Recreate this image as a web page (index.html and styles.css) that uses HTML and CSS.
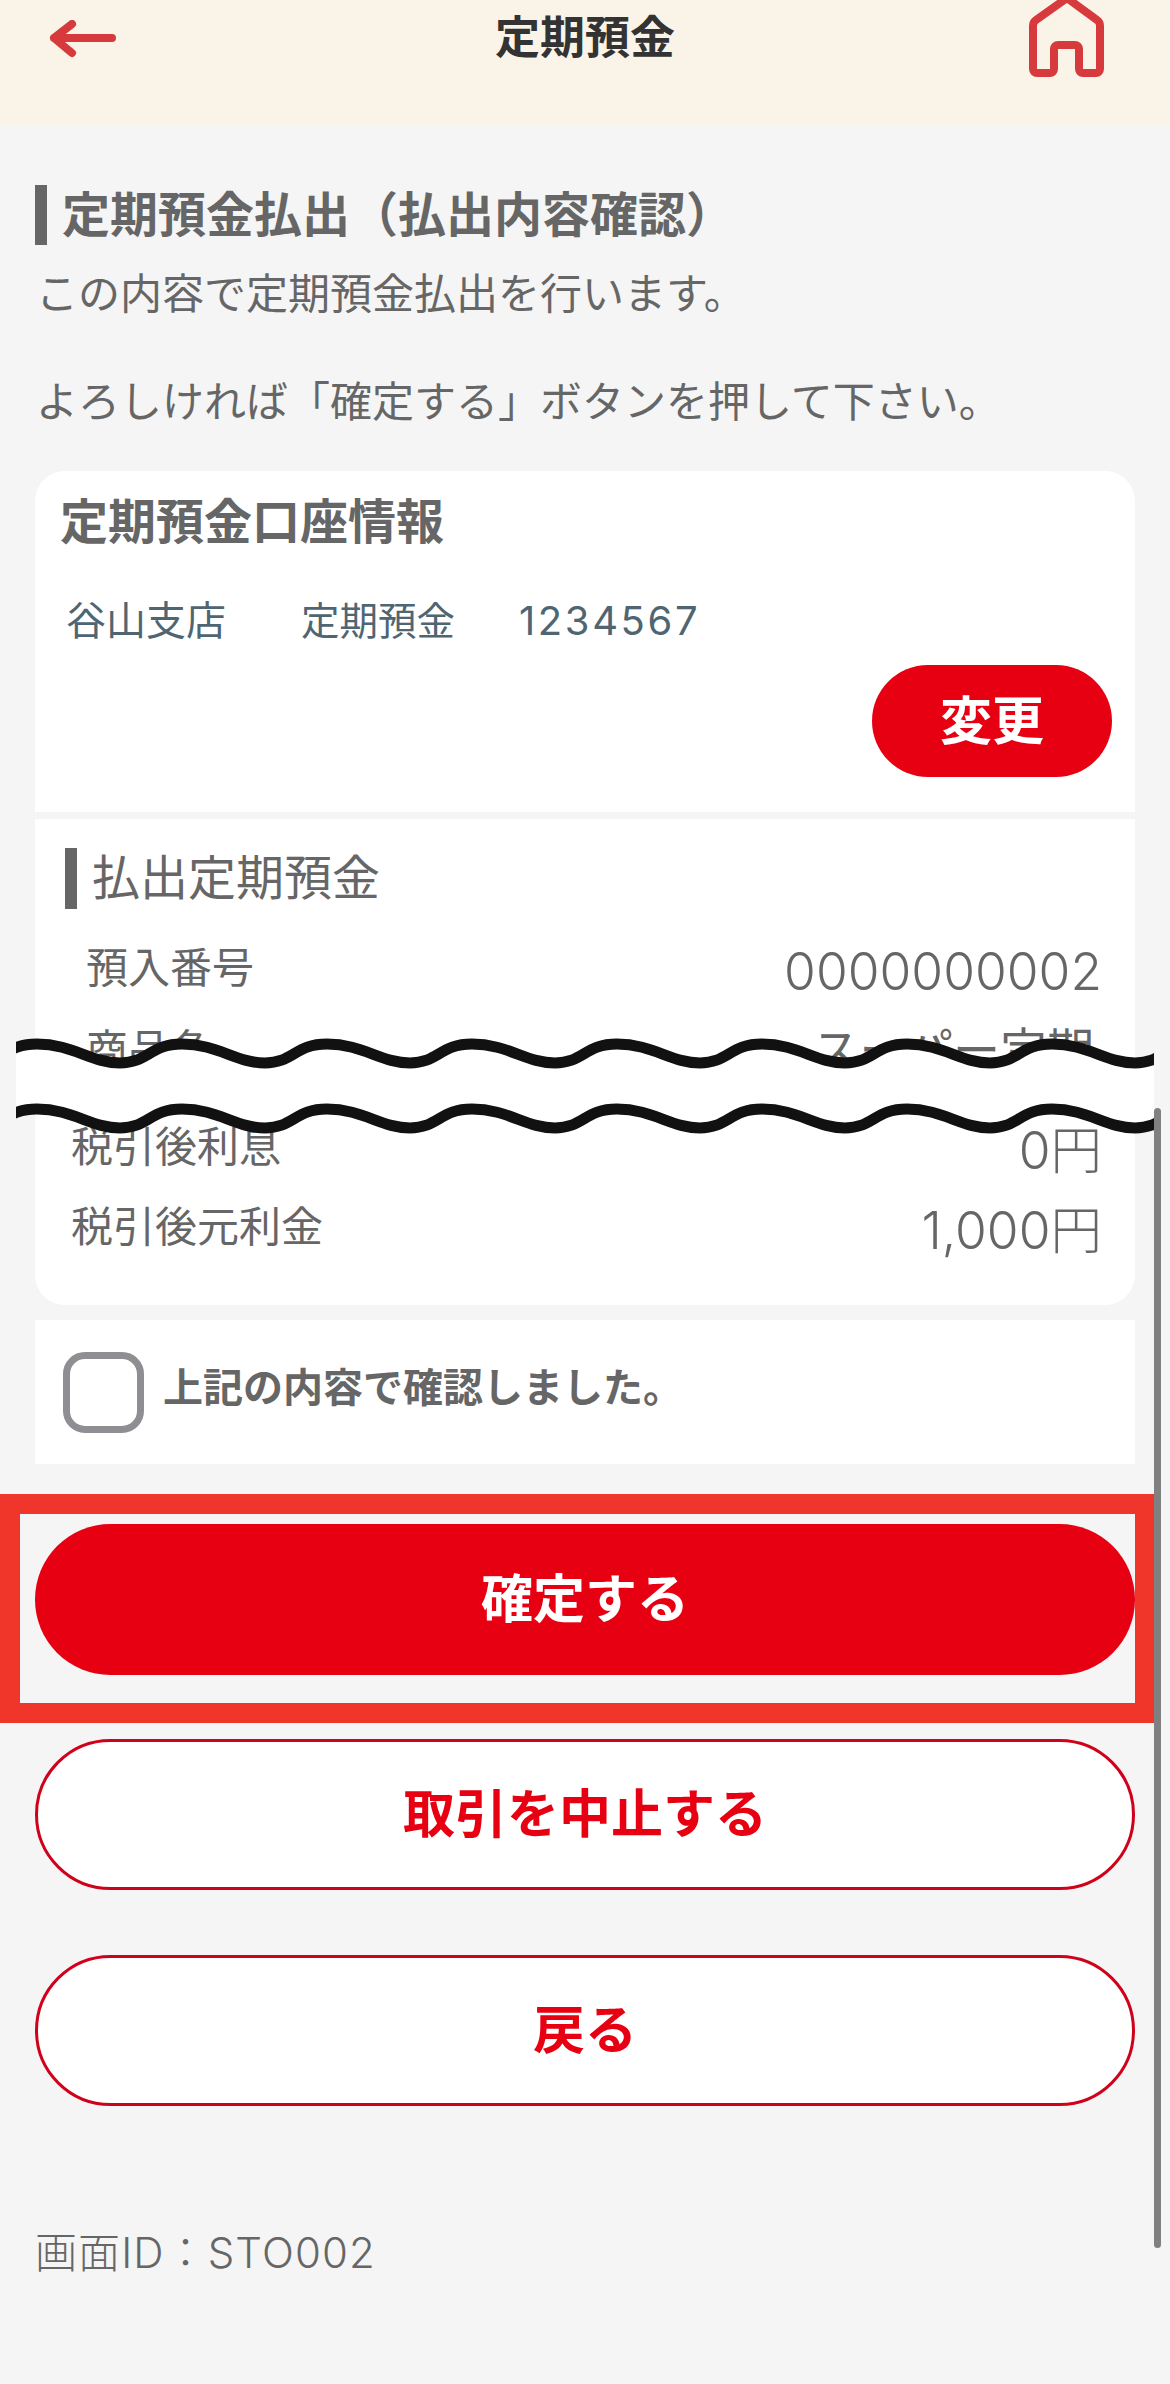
FILE: index.html
```html
<!DOCTYPE html>
<html lang="ja">
<head>
<meta charset="utf-8">
<title>定期預金</title>
<link rel="stylesheet" href="styles.css">
</head>
<body>
<div class="page">
  <header class="topbar">
    <svg class="ico-back" viewBox="0 0 76 44" width="76" height="44"><path d="M63 18H5M23 4 5 18l18 15" fill="none" stroke="#d63a3c" stroke-width="8" stroke-linecap="round" stroke-linejoin="round"/></svg>
    <h1 class="topbar-title">定期預金</h1>
    <svg class="ico-home" viewBox="0 0 94 94" width="94" height="94"><path d="M47 8 16 30Q13 32 13 36V79a4 4 0 0 0 4 4H30a4 4 0 0 0 4-4V59a4 4 0 0 1 4-4H55a4 4 0 0 1 4 4V79a4 4 0 0 0 4 4H76a4 4 0 0 0 4-4V36Q80 32 77 30Z" fill="none" stroke="#d63a3c" stroke-width="8" stroke-linejoin="round"/></svg>
  </header>

  <main class="content">
    <h2 class="section-title">定期預金払出（払出内容確認）</h2>
    <p class="lead">この内容で定期預金払出を行います。<br><br>よろしければ「確定する」ボタンを押して下さい。</p>

    <section class="card card-top">
      <h3 class="card-title">定期預金口座情報</h3>
      <div class="account">
        <span class="acc-branch">谷山支店</span>
        <span class="acc-type">定期預金</span>
        <span class="acc-no">1234567</span>
      </div>
      <div class="change-row"><button class="btn-change">変更</button></div>
    </section>

    <section class="card card-bottom">
      <h4 class="sub-title">払出定期預金</h4>
      <div class="row row-a first"><span class="k">預入番号</span><span class="v big">0000000002</span></div>
      <div class="row row-a second"><span class="k">商品名</span><span class="v kana">スーパー定期</span></div>
      <div class="row row-b third"><span class="k">税引後利息</span><span class="v big">0円</span></div>
      <div class="row row-b fourth"><span class="k">税引後元利金</span><span class="v big">1,000円</span></div>
    </section>

    <label class="confirm">
      <span class="checkbox"></span>
      <span class="confirm-text">上記の内容で確認しました。</span>
    </label>

    <button class="btn btn-primary">確定する</button>
    <button class="btn btn-outline cancel">取引を中止する</button>
    <button class="btn btn-outline back">戻る</button>

    <p class="screen-id">画面ID：STO002</p>
  </main>

  <div class="annot-frame"></div>

  <svg class="wave-break" viewBox="0 0 1138 110" width="1138" height="110">
    <path fill="#fff" d="M-124 14c35 0 55 19 83 19c28 0 30-19 62-19c35 0 55 19 83 19c28 0 30-19 62-19c35 0 55 19 83 19c28 0 30-19 62-19c35 0 55 19 83 19c28 0 30-19 62-19c35 0 55 19 83 19c28 0 30-19 62-19c35 0 55 19 83 19c28 0 30-19 62-19c35 0 55 19 83 19c28 0 30-19 62-19c35 0 55 19 83 19c28 0 30-19 62-19c35 0 55 19 83 19c28 0 30-19 62-19l0 65c-32 0-34 19-62 19c-28 0-48-19-83-19c-32 0-34 19-62 19c-28 0-48-19-83-19c-32 0-34 19-62 19c-28 0-48-19-83-19c-32 0-34 19-62 19c-28 0-48-19-83-19c-32 0-34 19-62 19c-28 0-48-19-83-19c-32 0-34 19-62 19c-28 0-48-19-83-19c-32 0-34 19-62 19c-28 0-48-19-83-19c-32 0-34 19-62 19c-28 0-48-19-83-19c-32 0-34 19-62 19c-28 0-48-19-83-19z"/>
    <path id="w" fill="none" stroke="#111" stroke-width="11" d="M-124 14c35 0 55 19 83 19c28 0 30-19 62-19c35 0 55 19 83 19c28 0 30-19 62-19c35 0 55 19 83 19c28 0 30-19 62-19c35 0 55 19 83 19c28 0 30-19 62-19c35 0 55 19 83 19c28 0 30-19 62-19c35 0 55 19 83 19c28 0 30-19 62-19c35 0 55 19 83 19c28 0 30-19 62-19c35 0 55 19 83 19c28 0 30-19 62-19c35 0 55 19 83 19c28 0 30-19 62-19"/>
    <use href="#w" y="65"/>
  </svg>

  <div class="scroll-thumb"></div>
</div>
</body>
</html>
```

FILE: styles.css
```css
* { box-sizing: border-box; }
html, body { margin: 0; padding: 0; }
body {
  background: #f5f5f5;
  font-family: "Inter", "Noto Sans CJK JP", sans-serif;
  color: #666;
}
.page { position: relative; width: 1170px; height: 2384px; overflow: hidden; background: #f5f5f5; }

.topbar {
  position: relative;
  height: 125px;
  background: #faf3e8;
  display: flex;
  justify-content: space-between;
  align-items: flex-start;
  padding-left: 49px;
  padding-right: 56px;
}
.ico-back { margin-top: 20px; }
.ico-home { margin-top: -10px; }
.topbar-title {
  margin: 14px 0 0;
  font-size: 45px;
  line-height: 48px;
  font-weight: 700;
  color: #333;
  position: absolute;
  left: 0; right: 0;
  text-align: center;
}

.content { padding: 60px 35px 0; }

.section-title {
  margin: 0;
  height: 60px;
  border-left: 12px solid #666;
  padding-left: 15px;
  font-size: 48px;
  line-height: 60px;
  font-weight: 700;
  color: #666;
}
.lead {
  margin: 22px 0 0;
  padding-left: 1px;
  font-size: 42px;
  line-height: 54px;
  color: #666;
}

.card { background: #fff; }
.card-top {
  margin-top: 42px;
  height: 341px;
  border-radius: 30px 30px 0 0;
  padding: 24px 25px 0;
}
.card-title {
  margin: 0;
  font-size: 48px;
  line-height: 54px;
  font-weight: 700;
  color: #666;
}
.account {
  margin-top: 45px;
  padding-left: 6px;
  display: flex;
  font-size: 40px;
  line-height: 54px;
  color: #4f6672;
}
.acc-branch { width: 235px; }
.acc-type { width: 218px; font-size: 38.5px; }
.acc-no { letter-spacing: 2.6px; }
.change-row { display: flex; justify-content: flex-end; margin-top: 17px; margin-right: -2px; }
.btn-change {
  width: 240px;
  height: 112px;
  border: 0;
  border-radius: 56px;
  background: #e60012;
  color: #fff;
  font: 700 52px/1 "Noto Sans CJK JP", sans-serif;
  padding: 0 0 7px;
}

.card-bottom {
  margin-top: 7px;
  height: 486px;
  border-radius: 0 0 30px 30px;
  padding: 29px 30px 0;
}
.sub-title {
  margin: 0;
  height: 61px;
  border-left: 12px solid #666;
  padding-left: 15px;
  font-size: 48px;
  line-height: 60px;
  font-weight: 400;
  color: #666;
}
.row { display: flex; justify-content: space-between; align-items: center; height: 60px; padding-right: 3px; font-size: 42px; line-height: 60px; color: #666; }
.row .v { font-weight: 300; }
.row .big { font-size: 51.5px; }
.row .kana { font-size: 47px; font-weight: 400; margin-right: 8px; }
.row-a { padding-left: 21px; }
.row-b { padding-left: 6px; }
.first { margin-top: 32px; }
.second { margin-top: 19px; }
.third { margin-top: 40px; }
.fourth { margin-top: 20px; }
.row-b .k { position: relative; top: -3px; }
.first .k { position: relative; top: -3px; }

.confirm {
  margin-top: 15px;
  height: 144px;
  background: #fff;
  display: flex;
  align-items: center;
  padding-left: 28px;
}
.checkbox {
  width: 81px;
  height: 81px;
  border: 7px solid #8e8e93;
  border-radius: 22px;
  background: #fff;
  flex: none;
}
.confirm-text {
  margin: 0 0 14px 19px;
  font-size: 40px;
  font-weight: 700;
  color: #666;
}

.btn {
  display: block;
  width: 1100px;
  height: 151px;
  border-radius: 76px;
  font: 700 52px/1 "Noto Sans CJK JP", sans-serif;
  padding: 0 0 7px;
}
.btn-primary { margin-top: 60px; background: #e60012; color: #fff; border: 0; }
.btn-outline { background: #fff; color: #e60012; border: 3px solid #d0021b; }
.cancel { margin-top: 64px; }
.back { margin-top: 65px; }

.screen-id {
  margin: 120px 0 0;
  font-size: 42px;
  line-height: 54px;
  font-weight: 300;
  letter-spacing: 1.1px;
  color: #666;
}

.annot-frame {
  position: absolute;
  left: 0;
  top: 1494px;
  width: 1154px;
  height: 229px;
  border: 20px solid #f0352a;
  border-right-width: 19px;
}
.wave-break { position: absolute; left: 16px; top: 1030px; overflow: hidden; }
.scroll-thumb {
  position: absolute;
  left: 1154px;
  top: 1108px;
  width: 7px;
  height: 1140px;
  border-radius: 4px;
  background: #808080;
}
```
